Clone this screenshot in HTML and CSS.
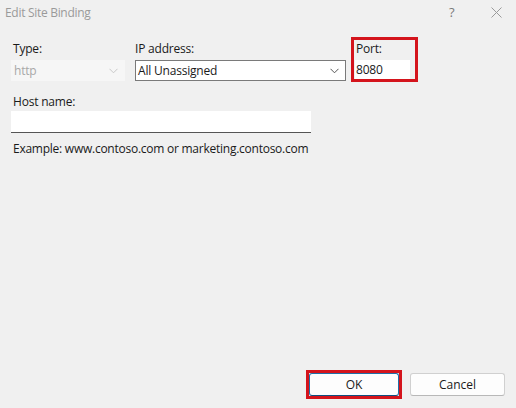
FILE: index.html
```html
<!DOCTYPE html>
<html>
<head>
<meta charset="utf-8">
<link rel="stylesheet" href="styles.css">
</head>
<body>
<div class="window">
  <div class="titlebar">
    <span class="title">Edit Site Binding</span>
    <span class="help">?</span>
    <span class="close">
      <svg width="11" height="11" viewBox="0 0 11 11"><path d="M0.5 0.5 L10.5 10.5 M10.5 0.5 L0.5 10.5" stroke="#9a9a9a" stroke-width="1" fill="none"/></svg>
    </span>
  </div>
  <div class="content">
    <div class="row1">
      <div class="field type-field">
        <div class="label">Type:</div>
        <div class="select disabled">
          <span class="value">http</span>
          <svg class="chev" width="9" height="6" viewBox="0 0 9 6"><path d="M0.5 0.8 L4.5 4.8 L8.5 0.8" stroke="#c8c8c8" stroke-width="1" fill="none"/></svg>
        </div>
      </div>
      <div class="field ip-field">
        <div class="label">IP address:</div>
        <div class="select">
          <span class="value">All Unassigned</span>
          <svg class="chev" width="9" height="6" viewBox="0 0 9 6"><path d="M0.5 0.8 L4.5 4.8 L8.5 0.8" stroke="#555" stroke-width="1" fill="none"/></svg>
        </div>
      </div>
      <div class="port-box">
        <div class="label port-label">Port:</div>
        <div class="port-input">8080</div>
      </div>
    </div>
    <div class="label host-label">Host name:</div>
    <div class="host-input"></div>
    <div class="example">Example: www.contoso.com or marketing.contoso.com</div>
  </div>
  <div class="buttons">
    <div class="ok-box"><div class="btn ok">OK</div></div>
    <div class="btn cancel">Cancel</div>
  </div>
</div>
</body>
</html>
```
FILE: styles.css
```css
html, body {
  margin: 0;
  padding: 0;
}
body {
  width: 516px;
  height: 408px;
  background: #f0f0f0;
  font-family: "Open Sans", "Noto Sans", "Liberation Sans", sans-serif;
  font-size: 12px;
  color: #1a1a1a;
  overflow: hidden;
}
.window {
  display: flex;
  flex-direction: column;
  height: 408px;
}
.titlebar {
  height: 24px;
  display: flex;
  align-items: center;
  padding-left: 5px;
  color: #9a9a9a;
}
.title {
  flex: 1;
  font-size: 12px;
  letter-spacing: -0.3px;
}
.help {
  font-size: 13px;
  color: #7a7a7a;
  width: 12px;
  margin-right: 30px;
}
.close {
  display: flex;
  margin-right: 14px;
}
.content {
  padding: 13px 0 0 11px;
  flex: 1;
}
.row1 {
  display: flex;
  align-items: flex-start;
}
.label {
  line-height: 15px;
  height: 15px;
  letter-spacing: -0.2px;
}
.field {
  padding-top: 4px;
}
.field .label {
  padding-left: 2px;
  margin-bottom: 4px;
}
.ip-field .label {
  padding-left: 0;
}
.type-field {
  width: 114px;
}
.ip-field {
  width: 211px;
  margin-left: 10px;
}
.select {
  height: 21px;
  box-sizing: border-box;
  display: flex;
  align-items: center;
  padding: 0 6px 0 2px;
  background: #fff;
  border: 1px solid #7a7a7a;
}
.select .value {
  flex: 1;
  letter-spacing: -0.2px;
}
.select.disabled {
  background: #f6f6f6;
  border-color: #f6f6f6;
  color: #a8a8a8;
}
.port-box {
  margin-left: 5px;
  width: 67px;
  box-sizing: border-box;
  border: 3px solid #d4141c;
  padding: 1px 5px 0 1px;
  height: 45px;
}
.port-label {
  margin-left: 1px;
  margin-bottom: 4px;
}
.port-input {
  height: 19px;
  background: #fff;
  line-height: 19px;
  padding-left: 1px;
  letter-spacing: -0.2px;
}
.host-label {
  margin-top: 12px;
  padding-left: 2px;
}
.host-input {
  width: 300px;
  height: 22px;
  margin-top: 2px;
  box-sizing: border-box;
  background: #fff;
  border-bottom: 1px solid #555;
}
.example {
  margin-top: 8px;
  line-height: 15px;
  padding-left: 2px;
  letter-spacing: -0.25px;
}
.buttons {
  display: flex;
  justify-content: flex-end;
  align-items: center;
  gap: 8px;
  padding: 0 11px 9px 0;
}
.ok-box {
  border: 3px solid #d4141c;
  display: flex;
}
.btn {
  height: 23px;
  box-sizing: border-box;
  display: flex;
  align-items: center;
  justify-content: center;
  background: #fdfdfd;
  border-radius: 3px;
}
.ok {
  width: 90px;
  border: 1px solid #1f6fa8;
  border-bottom-color: #0f4f80;
}
.cancel {
  width: 95px;
  border: 1px solid #d0d0d0;
  border-bottom-color: #b8b8b8;
}
```
